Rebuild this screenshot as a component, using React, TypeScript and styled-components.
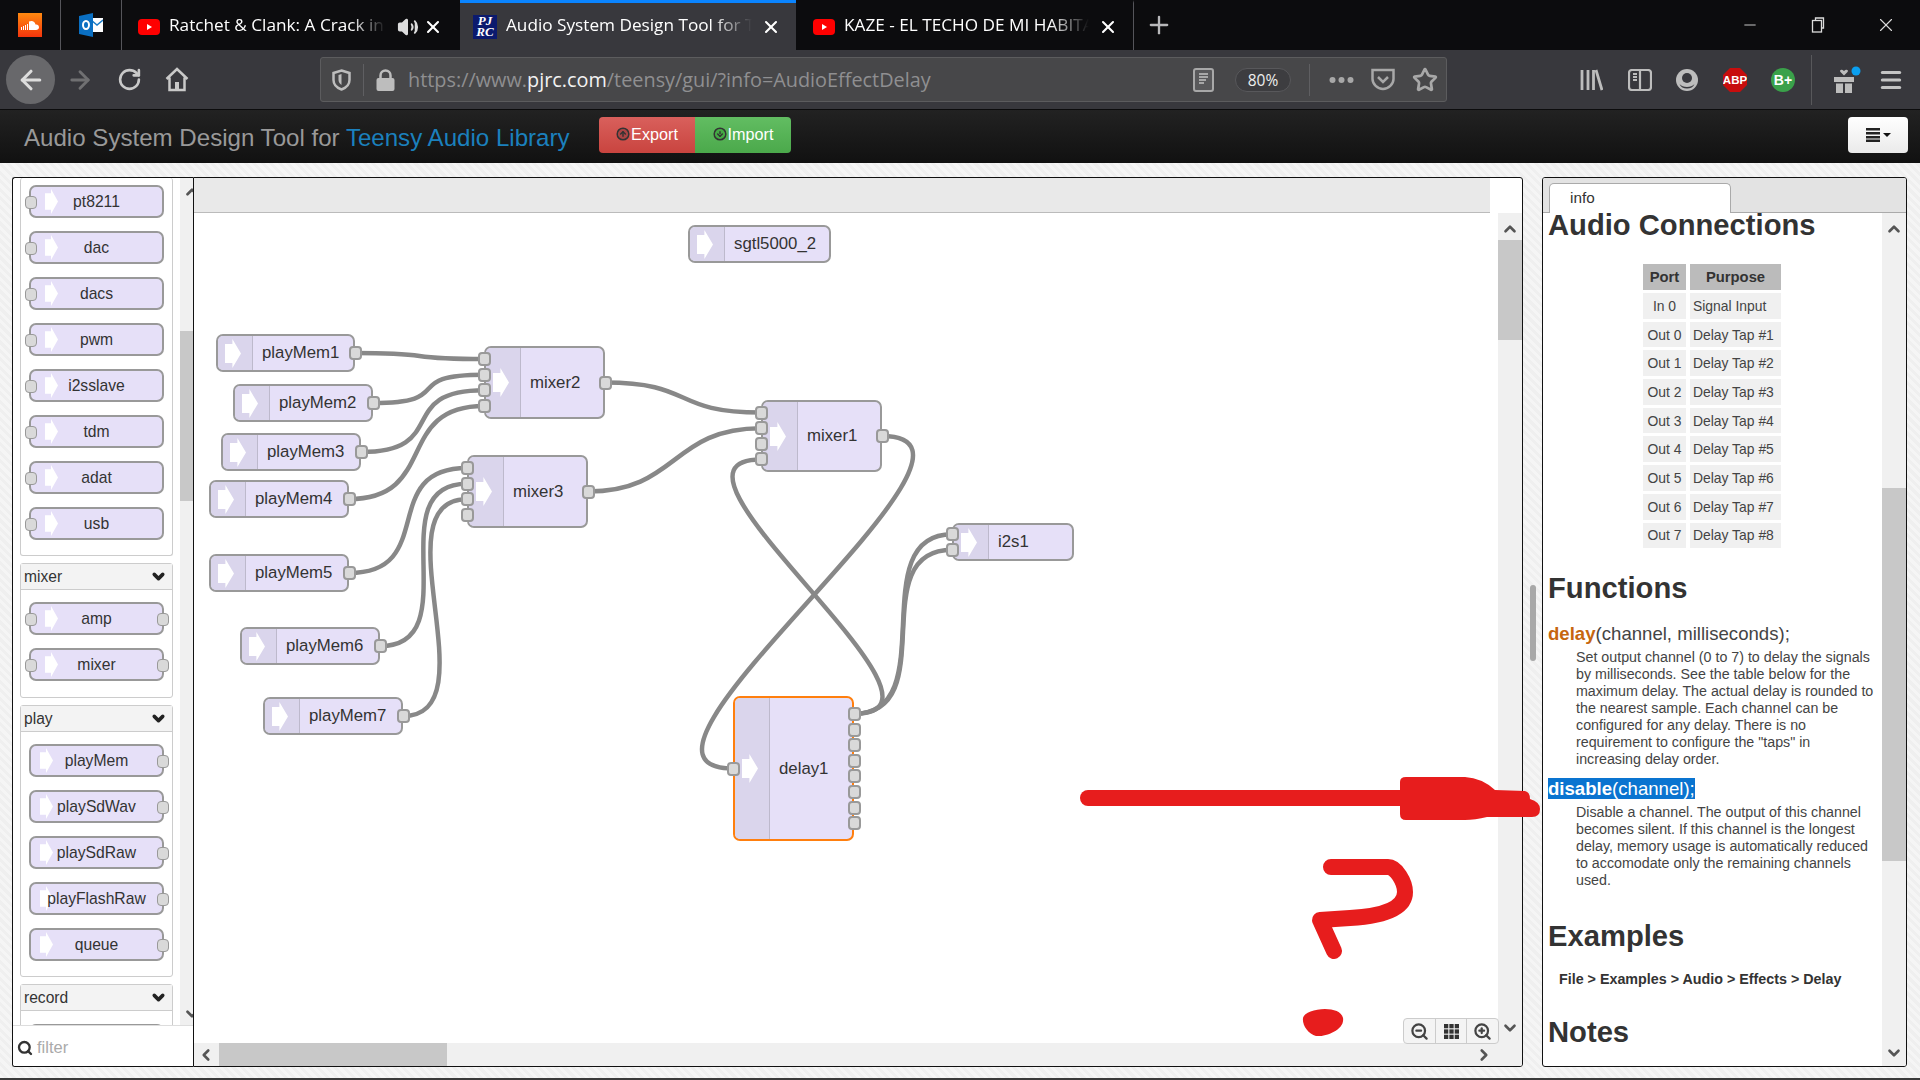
import React from 'react';
import styled, { createGlobalStyle } from 'styled-components';
import {
    ArrowLeft,
    ArrowRight,
    ChevronDown,
    ChevronLeft,
    ChevronRight,
    ChevronUp,
    CircleArrowDown,
    CircleArrowUp,
    Menu,
    Minus,
    Plus,
    RotateCw,
    Search,
    Star,
    Volume2,
    X,
    ZoomIn,
    ZoomOut,
} from 'lucide-react';

const CANVAS_X = 195;
const CANVAS_Y = 213;
const NODE_CURVE = 120;
const PORT_STEP = 15.6;

interface IFlowNode {
    id: string;
    x: number;
    y: number;
    w: number;
    h: number;
    inputs?: number;
    outputs?: number;
    selected?: boolean;
}

const flowNodes: IFlowNode[] = [
    { id: 'sgtl5000_2', x: 689, y: 225, w: 143, h: 38 },
    { id: 'playMem1', x: 217, y: 334, w: 139, h: 38, outputs: 1 },
    { id: 'playMem2', x: 234, y: 384, w: 140, h: 38, outputs: 1 },
    { id: 'playMem3', x: 222, y: 433, w: 140, h: 38, outputs: 1 },
    { id: 'playMem4', x: 210, y: 480, w: 140, h: 38, outputs: 1 },
    { id: 'playMem5', x: 210, y: 554, w: 140, h: 38, outputs: 1 },
    { id: 'playMem6', x: 241, y: 627, w: 140, h: 38, outputs: 1 },
    { id: 'playMem7', x: 264, y: 697, w: 140, h: 38, outputs: 1 },
    { id: 'mixer2', x: 485, y: 346, w: 121, h: 73, inputs: 4, outputs: 1 },
    { id: 'mixer3', x: 468, y: 455, w: 121, h: 73, inputs: 4, outputs: 1 },
    { id: 'mixer1', x: 762, y: 400, w: 121, h: 72, inputs: 4, outputs: 1 },
    { id: 'i2s1', x: 953, y: 523, w: 122, h: 38, inputs: 2 },
    { id: 'delay1', x: 734, y: 696, w: 121, h: 145, inputs: 1, outputs: 8, selected: true },
];

const links: [string, number, string, number][] = [
    ['playMem1', 0, 'mixer2', 0],
    ['playMem2', 0, 'mixer2', 1],
    ['playMem3', 0, 'mixer2', 2],
    ['playMem4', 0, 'mixer2', 3],
    ['playMem5', 0, 'mixer3', 0],
    ['playMem6', 0, 'mixer3', 1],
    ['playMem7', 0, 'mixer3', 2],
    ['mixer2', 0, 'mixer1', 0],
    ['mixer3', 0, 'mixer1', 1],
    ['delay1', 0, 'mixer1', 3],
    ['mixer1', 0, 'delay1', 0],
    ['delay1', 0, 'i2s1', 0],
    ['delay1', 0, 'i2s1', 1],
];

const portY = (node: IFlowNode, index: number, count: number) =>
    node.y + node.h / 2 + (index - (count - 1) / 2) * PORT_STEP;

// same bezier shape the node editor uses for its links
const wirePath = (x1: number, y1: number, x2: number, y2: number) => {
    const dx = x2 - x1;
    const dy = y2 - y1;
    const delta = Math.sqrt(dx * dx + dy * dy);
    let scale = 0.75;
    if (delta < NODE_CURVE) {
        scale = 0.75 - 0.75 * ((NODE_CURVE - delta) / NODE_CURVE);
    }
    if (dx < 0) {
        scale += 2 * (Math.min(5 * NODE_CURVE, Math.abs(dx)) / (5 * NODE_CURVE));
    }
    const off = scale * NODE_CURVE;
    return `M${x1} ${y1} C${x1 + off} ${y1} ${x2 - off} ${y2} ${x2} ${y2}`;
};

const GlobalStyle = createGlobalStyle`
    html, body {
        margin: 0;
        padding: 0;
        background: #38383d;
    }
    * {
        box-sizing: border-box;
    }
`;

const Page = styled.div`
    position: relative;
    width: 1920px;
    height: 1080px;
    display: flex;
    flex-direction: column;
    overflow: hidden;
    font-family: 'Liberation Sans', Arial, sans-serif;
`;

/* browser chrome */
const TabStrip = styled.div`
    height: 50px;
    flex: none;
    display: flex;
    background: #0c0c0e;
    color: #fff;
    font-family: 'Open Sans', sans-serif;
    font-size: 17.2px;
`;

const PinnedTab = styled.div`
    width: 61px;
    display: flex;
    align-items: center;
    justify-content: center;
    border-right: 1px solid #55555a;
`;

const Tab = styled.div<{ $w: number; $active?: boolean; $sep?: boolean; $pad: number; $right: number }>`
    width: ${(p) => p.$w}px;
    display: flex;
    align-items: center;
    gap: 9px;
    padding: 0 ${(p) => p.$right}px 0 ${(p) => p.$pad}px;
    background: ${(p) => (p.$active ? '#38383d' : 'transparent')};
    border-top: 3px solid ${(p) => (p.$active ? '#0a84ff' : 'transparent')};
    border-right: ${(p) => (p.$sep ? '1px solid #55555a' : 'none')};
`;

const TabTitle = styled.span`
    flex: 1;
    min-width: 0;
    padding-bottom: 4px;
    white-space: nowrap;
    overflow: hidden;
    -webkit-mask-image: linear-gradient(to right, #000 84%, transparent 100%);
    mask-image: linear-gradient(to right, #000 84%, transparent 100%);
`;

const SpeakerSlot = styled.span`
    display: flex;
    flex: none;
    margin: 0 -5px 0 2px;
`;

const PjrcIcon = styled.span`
    width: 24px;
    height: 24px;
    flex: none;
    background: #0b1a6e;
    color: #fff;
    font-family: 'Liberation Serif', serif;
    font-style: italic;
    font-weight: bold;
    font-size: 13px;
    line-height: 11.5px;
    text-align: center;
`;

const NewTab = styled.div`
    width: 50px;
    display: flex;
    align-items: center;
    justify-content: center;
    color: #b8b8ba;
`;

const WindowControls = styled.div`
    margin-left: auto;
    display: flex;
    align-items: center;
    color: #dcdcdc;
`;

const WindowButton = styled.div`
    width: 68px;
    display: flex;
    justify-content: center;
`;

const NavBar = styled.div`
    height: 60px;
    flex: none;
    display: flex;
    align-items: center;
    background: #38383d;
    border-bottom: 1px solid #0c0c0d;
`;

const NavGroup = styled.div`
    width: 320px;
    flex: none;
    display: flex;
    align-items: center;
    gap: 23px;
    padding-left: 6px;
`;

const BackButton = styled.div`
    width: 49px;
    height: 49px;
    margin-right: -12px;
    border-radius: 50%;
    background: #68686b;
    color: #ddd;
    display: flex;
    align-items: center;
    justify-content: center;
`;

const UrlBar = styled.div`
    width: 1127px;
    height: 45px;
    flex: none;
    display: flex;
    align-items: center;
    padding: 0 8px 0 11px;
    background: #474749;
    border: 1px solid #5c5c5e;
    border-radius: 3px;
`;

const UrlDivider = styled.div<{ $ml: number; $mr: number; $h: number }>`
    width: 1px;
    height: ${(p) => p.$h}px;
    margin: 0 ${(p) => p.$mr}px 0 ${(p) => p.$ml}px;
    background: #5f5f62;
    flex: none;
`;

const UrlText = styled.div`
    flex: 1;
    margin-left: 13px;
    font-family: 'Open Sans', sans-serif;
    font-size: 19.85px;
    color: #8f8f91;
    white-space: nowrap;
`;

const Host = styled.span`
    color: #f2f2f2;
`;

const ZoomPill = styled.div`
    width: 56px;
    height: 24px;
    margin: 0 18px 0 21px;
    flex: none;
    border: 1px solid #58585b;
    border-radius: 12px;
    background: #3d3d40;
    color: #eee;
    font-family: 'Open Sans', sans-serif;
    font-size: 15.5px;
    line-height: 22px;
    text-align: center;
`;

const UrlSpacer = styled.span`
    width: 17px;
    flex: none;
`;

const ToolGroup = styled.div`
    flex: 1;
    display: flex;
    align-items: center;
    gap: 24.6px;
    padding-left: 133px;
`;

const ToolDivider = styled.div`
    width: 1px;
    height: 50px;
    margin: 0 -4px 0 -9px;
    background: #58585b;
`;

/* page header */
const HeaderBar = styled.div`
    height: 53px;
    flex: none;
    display: flex;
    align-items: flex-start;
    padding: 7px 12px 0 24px;
    background: linear-gradient(#222, #111);
`;

const Brand = styled.div`
    font-size: 24.1px;
    line-height: 40px;
    color: #999;
    margin-top: 1px;
    width: 575px;
    flex: none;
    white-space: nowrap;
`;

const BrandLink = styled.span`
    color: #1b80bd;
`;

const DeployButton = styled.div<{ $bg: string; $left?: boolean }>`
    width: 96px;
    height: 36px;
    display: flex;
    align-items: center;
    justify-content: center;
    gap: 1px;
    padding-bottom: 2px;
    background: ${(p) => p.$bg};
    border-radius: ${(p) => (p.$left ? '4px 0 0 4px' : '0 4px 4px 0')};
    color: #fff;
    font-size: 16.2px;
`;

const MenuButton = styled.div`
    margin-left: auto;
    width: 60px;
    height: 36px;
    display: flex;
    align-items: center;
    justify-content: center;
    gap: 3px;
    border-radius: 4px;
    background: linear-gradient(#fff, #eaeaea);
    color: #222;
`;

const Caret = styled.span`
    border-left: 4px solid transparent;
    border-right: 4px solid transparent;
    border-top: 4px solid #111;
`;

/* main */
const Main = styled.div`
    flex: 1;
    min-height: 0;
    display: flex;
    padding: 14px 13px 11px 12px;
    background: repeating-linear-gradient(45deg, #f5f5f5 0 3px, #efefef 3px 6px);
`;

const Palette = styled.div`
    width: 181px;
    flex: none;
    display: flex;
    flex-direction: column;
    background: #fff;
    border: 1px solid #111;
    border-right: none;
    border-radius: 3px 0 0 3px;
    overflow: hidden;
`;

const PaletteBody = styled.div`
    flex: 1;
    min-height: 0;
    display: flex;
    overflow: hidden;
`;

const PaletteList = styled.div`
    width: 167px;
    flex: none;
    padding: 0 7px;
`;

const PaletteTrack = styled.div`
    flex: 1;
    display: flex;
    flex-direction: column;
    justify-content: space-between;
    position: relative;
    padding-bottom: 4px;
    background: #f0f0f0;
    color: #555;
`;

const TrackThumb = styled.div<{ $top: number; $h: number }>`
    position: absolute;
    left: 0;
    right: 0;
    top: ${(p) => p.$top}px;
    height: ${(p) => p.$h}px;
    background: #c8c8c8;
`;

const ClippedChevron = styled.span<{ $mt: number }>`
    display: block;
    height: 16px;
    margin: ${(p) => p.$mt}px 0 0 3px;
`;

const Group = styled.div<{ $open?: boolean }>`
    border: 1px solid #ccc;
    border-radius: 3px;
    margin-bottom: 7px;
    ${(p) => (p.$open ? 'border-top: none;' : '')}
`;

const GroupHeader = styled.div`
    height: 26px;
    display: flex;
    align-items: center;
    justify-content: space-between;
    padding: 0 5px 0 3px;
    background: #f3f3f3;
    border-bottom: 1px solid #ccc;
    font-size: 15.6px;
    color: #333;
`;

const GroupBody = styled.div<{ $top: number; $bottom: number }>`
    display: flex;
    flex-direction: column;
    gap: 13px;
    padding: ${(p) => p.$top}px 0 ${(p) => p.$bottom}px 8px;
`;

const PaletteNode = styled.div`
    position: relative;
    width: 135px;
    height: 33px;
    background: #e6e0f8;
    border: 2px solid #999;
    border-radius: 7px;
    font-size: 15.7px;
    line-height: 29px;
    text-align: center;
    color: #333;
`;

const PaletteName = styled.span`
    position: relative;
`;

const PaletteArrow = styled.span<{ $left: number }>`
    position: absolute;
    display: flex;
    left: ${(p) => p.$left}px;
    top: 2px;
`;

const PalettePort = styled.span<{ $side: 'left' | 'right' }>`
    position: absolute;
    ${(p) => p.$side}: ${(p) => (p.$side === 'left' ? -6 : -7)}px;
    top: 9px;
    width: 12px;
    height: 13px;
    background: #d9d9d9;
    border: 1.5px solid #999;
    border-radius: 4px;
`;

const FilterBox = styled.div`
    height: 41px;
    flex: none;
    display: flex;
    align-items: center;
    gap: 4px;
    padding: 3px 0 0 4px;
    background: #fff;
    border-top: 1px solid #ddd;
    font-size: 16.5px;
    color: #aaa;
`;

const Workspace = styled.div`
    width: 1330px;
    flex: none;
    display: flex;
    flex-direction: column;
    position: relative;
    background: #fff;
    border: 1px solid #111;
    border-radius: 0 3px 3px 0;
    overflow: hidden;
`;

const WorkspaceTabs = styled.div`
    height: 35px;
    width: 1296px;
    flex: none;
    background: #e9e9e9;
    border-bottom: 1px solid #bbb;
`;

const WorkspaceRow = styled.div`
    flex: 1;
    min-height: 0;
    display: flex;
`;

const CanvasColumn = styled.div`
    width: 1304px;
    flex: none;
    display: flex;
    flex-direction: column;
`;

const Canvas = styled.div`
    flex: 1;
    min-height: 0;
    position: relative;
    overflow: hidden;
    background: #fff;
`;

const WireLayer = styled.svg`
    position: absolute;
    left: 0;
    top: 0;
`;

const FlowNodeBox = styled.div<{ $x: number; $y: number; $w: number; $h: number; $selected?: boolean }>`
    position: absolute;
    left: ${(p) => p.$x}px;
    top: ${(p) => p.$y}px;
    width: ${(p) => p.$w}px;
    height: ${(p) => p.$h}px;
    display: flex;
    align-items: center;
    background: #e6e0f8;
    border: 2px solid ${(p) => (p.$selected ? '#ff7f0e' : '#999')};
    border-radius: 7px;
    font-size: 16.8px;
    color: #333;
`;

const FlowIcon = styled.div`
    width: 35px;
    align-self: stretch;
    flex: none;
    display: flex;
    align-items: center;
    padding-left: 7px;
    background: #dad5ec;
    border-right: 1px solid #bdb9cc;
    border-radius: 5px 0 0 5px;
`;

const FlowLabel = styled.span`
    margin-left: 9px;
`;

const FlowPort = styled.span<{ $side: 'left' | 'right'; $center: number }>`
    position: absolute;
    ${(p) => p.$side}: ${(p) => (p.$side === 'left' ? -8 : -9)}px;
    top: ${(p) => p.$center - 9}px;
    width: 13px;
    height: 14px;
    background: #d9d9d9;
    border: 2px solid #999;
    border-radius: 4px;
`;

const ZoomControls = styled.div`
    position: absolute;
    right: 23px;
    bottom: 22px;
    width: 96px;
    height: 26px;
    display: flex;
    background: #f4f4f4;
    border: 1px solid #ccc;
    border-radius: 4px;
    color: #444;
`;

const ZoomCell = styled.div<{ $sep?: boolean }>`
    flex: 1;
    display: flex;
    align-items: center;
    justify-content: center;
    border-right: ${(p) => (p.$sep ? '1px solid #ccc' : 'none')};
`;

const HScroll = styled.div`
    height: 23px;
    flex: none;
    position: relative;
    display: flex;
    align-items: center;
    justify-content: space-between;
    padding: 0 5px 0 3px;
    background: #f0f0f0;
    color: #555;
`;

const HThumb = styled.div`
    position: absolute;
    left: 25px;
    top: 0;
    bottom: 0;
    width: 228px;
    background: #c8c8c8;
`;

const VScroll = styled.div<{ $bottom: number }>`
    flex: 1;
    position: relative;
    display: flex;
    flex-direction: column;
    align-items: center;
    justify-content: space-between;
    padding: 7px 0 ${(p) => p.$bottom}px;
    background: #f0f0f0;
    color: #555;
`;

const SideGap = styled.div`
    width: 19px;
    flex: none;
    display: flex;
    align-items: center;
    justify-content: center;
`;

const Splitter = styled.div`
    width: 6px;
    height: 76px;
    margin: 2px 0 0 1px;
    border-radius: 3px;
    background: #a8a8a8;
`;

const Sidebar = styled.div`
    flex: 1;
    min-width: 0;
    display: flex;
    flex-direction: column;
    background: #fff;
    border: 1px solid #111;
    border-radius: 3px;
    overflow: hidden;
`;

const SidebarTabs = styled.div`
    height: 35px;
    flex: none;
    display: flex;
    align-items: flex-end;
    padding-left: 6px;
    background: #e3e3e3;
    border-bottom: 1px solid #aaa;
`;

const SidebarTab = styled.div`
    width: 182px;
    height: 30px;
    margin-bottom: -1px;
    padding-left: 20px;
    background: #fff;
    border: 1px solid #aaa;
    border-bottom: none;
    border-radius: 5px 5px 0 0;
    font-size: 15.3px;
    line-height: 27px;
    color: #333;
`;

const SidebarRow = styled.div`
    flex: 1;
    min-height: 0;
    display: flex;
`;

const SidebarContent = styled.div`
    width: 339px;
    flex: none;
    padding-left: 5px;
    overflow: hidden;
    color: #333;
`;

const Heading = styled.h2<{ $mt: number }>`
    margin: ${(p) => p.$mt}px 0 0;
    font-size: 29.2px;
    line-height: 32px;
    font-weight: bold;
    color: #333;
`;

const PortTable = styled.table`
    margin: 20px 0 0 91px;
    border-collapse: separate;
    border-spacing: 4px 3px;
    font-size: 13.9px;
    color: #444;
`;

const HeadCell = styled.th<{ $w: number }>`
    width: ${(p) => p.$w}px;
    height: 26px;
    padding: 0;
    background: #bbb;
    color: #333;
    font-size: 14.8px;
    text-align: center;
`;

const Cell = styled.td<{ $center?: boolean }>`
    height: 25.7px;
    padding: 0 0 0 ${(p) => (p.$center ? 0 : 3)}px;
    background: #f0f0f0;
    text-align: ${(p) => (p.$center ? 'center' : 'left')};
    white-space: nowrap;
`;

const Signature = styled.div<{ $mt: number }>`
    margin-top: ${(p) => p.$mt}px;
    font-size: 18.6px;
    line-height: 22px;
    color: #444;
`;

const FnName = styled.b`
    color: #c6660f;
`;

const Selected = styled.span`
    background: #0a74d0;
    color: #fff;
    & b {
        color: #fff;
    }
`;

const Description = styled.p`
    margin: 3.5px 0 0 28px;
    width: 300px;
    font-size: 14.25px;
    line-height: 17px;
    color: #444;
`;

const ExamplePath = styled.div`
    margin: 19.5px 0 0 11px;
    font-size: 14.3px;
    line-height: 17px;
    font-weight: bold;
    color: #333;
`;

const BottomEdge = styled.div`
    height: 2px;
    flex: none;
    background: #3a3a3a;
`;

const ScribbleLayer = styled.svg`
    position: absolute;
    left: 0;
    top: 0;
    pointer-events: none;
`;

const SoundCloudIcon = () => (
    <svg width="24" height="24" viewBox="0 0 24 24">
        <defs>
            <linearGradient id="sc" x1="0" y1="0" x2="0" y2="1">
                <stop offset="0" stopColor="#ff8a10" />
                <stop offset="1" stopColor="#f5350c" />
            </linearGradient>
        </defs>
        <rect width="24" height="24" fill="url(#sc)" />
        <path
            d="M3 14h1v3H3zM5 13h1v4H5zM7 12h1v5H7zM9 11h1v6H9zM11 8.500c3-1.500 6 0 6.500 3 2-.5 3.500 1 3.500 2.800S19.500 17 18 17h-7z"
            fill="#fff"
        />
    </svg>
);

const OutlookIcon = () => (
    <svg width="24" height="24" viewBox="0 0 24 24">
        <rect x="12" y="5" width="12" height="14" fill="#fff" />
        <path d="M12 7l6 5 6-5" fill="none" stroke="#1a7cc8" strokeWidth="1.500" />
        <path d="M0 3l14-3v24L0 21z" fill="#0a6fc2" />
        <ellipse cx="7" cy="12" rx="3" ry="4" fill="none" stroke="#fff" strokeWidth="2" />
    </svg>
);

const YoutubeIcon = () => (
    <svg width="22" height="16" viewBox="0 0 22 16" style={{ flex: 'none' }}>
        <rect width="22" height="16" rx="4" fill="#f00" />
        <path d="M9 5l5 3-5 3z" fill="#fff" />
    </svg>
);

const NodeArrow = ({ w, h }: { w: number; h: number }) => (
    <svg width={w} height={h} viewBox="0 0 13 23" preserveAspectRatio="none">
        <path d="M0 4 L6 4 L6 0 L13 11.500 L6 23 L6 19 L0 19 Z" fill="#fff" />
    </svg>
);

const HomeIcon = () => (
    <svg width="24" height="25" viewBox="0 0 24 25" fill="none" stroke="#c9c9c9" strokeWidth="2.500">
        <path d="M1.500 12 12 2l10.500 10M4.500 10.500V23h15V10.500" />
        <rect x="10" y="15" width="4" height="8" fill="#c9c9c9" stroke="none" />
    </svg>
);

const ShieldIcon = () => (
    <svg width="19" height="22" viewBox="0 0 19 22">
        <path d="M9.500 1.500 17.500 4v7c0 5-4 8-8 9.500-4-1.500-8-4.500-8-9.500V4z" fill="none" stroke="#bdbdbd" strokeWidth="2.500" />
        <path d="M9.500 5 6.500 6v5c0 2 1.500 4 3 5z" fill="#bdbdbd" />
    </svg>
);

const LockIcon = () => (
    <svg width="19" height="22" viewBox="0 0 19 22">
        <path d="M4.500 10V6.500a5 5 0 0 1 10 0V10" fill="none" stroke="#bdbdbd" strokeWidth="2.500" />
        <rect x="0.500" y="9" width="18" height="13" rx="2" fill="#bdbdbd" />
    </svg>
);

const ReaderIcon = () => (
    <svg width="21" height="24" viewBox="0 0 21 24" fill="none" stroke="#a8a8a8">
        <rect x="1" y="1" width="19" height="22" rx="2" strokeWidth="2" fill="#59595b" />
        <path d="M6 6h9M6 9h9M6 12h7M6 15h5" strokeWidth="1.300" stroke="#c2c2c2" />
    </svg>
);

const DotsIcon = () => (
    <svg width="25" height="8" viewBox="0 0 25 8" fill="#a8a8a8">
        <circle cx="3.500" cy="4" r="3" />
        <circle cx="12.500" cy="4" r="3" />
        <circle cx="21.500" cy="4" r="3" />
    </svg>
);

const PocketIcon = () => (
    <svg width="24" height="23" viewBox="0 0 24 23" fill="none" stroke="#a8a8a8" strokeWidth="2.500">
        <path d="M1.500 2h21v9c0 5-5 10-10.500 10S1.500 16 1.500 11z" />
        <path d="M7 9l5 5 5-5" />
    </svg>
);

const LibraryIcon = () => (
    <svg width="23" height="22" viewBox="0 0 23 22" stroke="#bdbdbd" strokeWidth="2.800">
        <path d="M2 1v20M8 1v20M13.500 1v20M16 1l6 20" />
    </svg>
);

const SidebarIcon = () => (
    <svg width="24" height="22" viewBox="0 0 24 22" fill="none" stroke="#bdbdbd" strokeWidth="2.200">
        <rect x="1" y="1" width="22" height="20" rx="3" />
        <path d="M12 1v20M5 5h4M5 8h4M5 11h4" />
    </svg>
);

const AccountIcon = () => (
    <svg width="22" height="22" viewBox="0 0 22 22">
        <circle cx="11" cy="11" r="11" fill="#bdbdbd" />
        <circle cx="11" cy="9" r="5" fill="#38383d" />
        <path d="M3.500 15c3 4 12 4 15 0-2 6-13 6-15 0z" fill="#38383d" />
    </svg>
);

const AbpIcon = () => (
    <svg width="24" height="24" viewBox="0 0 24 24">
        <path d="M7 0h10l7 7v10l-7 7H7l-7-7V7z" fill="#c70d0d" />
        <text x="12" y="16" fontSize="11.500" fontWeight="bold" fontFamily="'Liberation Sans'" textAnchor="middle" fill="#fff">
            ABP
        </text>
    </svg>
);

const BPlusIcon = () => (
    <svg width="24" height="24" viewBox="0 0 24 24">
        <circle cx="12" cy="12" r="12" fill="#3aa14a" />
        <text x="12" y="17" fontSize="14" fontWeight="bold" fontFamily="'Liberation Sans'" textAnchor="middle" fill="#fff">
            B+
        </text>
    </svg>
);

const GiftIcon = () => (
    <svg width="28" height="28" viewBox="0 0 28 28" style={{ marginRight: -7 }}>
        <path d="M1 11h20v5H1zM3 17.500h7V27H3zM12 17.500h7V27h-7z" fill="#bdbdbd" />
        <path d="M11 9.500 7.500 6c-1.500-2 1-3.500 3.500-1 2.500-2.500 5-1 3.500 1z" fill="#bdbdbd" />
        <circle cx="23" cy="5" r="4.500" fill="#0a9ff0" />
    </svg>
);

const GridIcon = () => (
    <svg width="15" height="15" viewBox="0 0 14 14" fill="#333">
        {[0, 5, 10].flatMap((y) => [0, 5, 10].map((x) => <rect key={`${x}-${y}`} x={x} y={y} width="4" height="4" />))}
    </svg>
);

const BarsIcon = () => (
    <svg width="14" height="14" viewBox="0 0 14 14" fill="#222">
        <path d="M0 0h14v2.500H0zM0 4h14v2.500H0zM0 8h14v2.500H0zM0 11.500h14V14H0z" />
    </svg>
);

const RestoreIcon = () => (
    <svg width="15" height="16" viewBox="0 0 15 16" fill="none" stroke="#dcdcdc" strokeWidth="1.300">
        <path d="M4.500 3V1h8v10h-2" />
        <rect x="1.500" y="3.500" width="9" height="11.500" />
    </svg>
);

const Chevrons = {
    up: <ChevronUp size={18} strokeWidth={3.5} />,
    down: <ChevronDown size={18} strokeWidth={3.5} />,
};

const GroupChevron = () => <ChevronDown size={17} strokeWidth={5} color="#222" />;

const PaletteItem = ({ name, input, output }: { name: string; input?: boolean; output?: boolean }) => (
    <PaletteNode>
        <PaletteArrow $left={input ? 14 : 9}>
            <NodeArrow w={13} h={25} />
        </PaletteArrow>
        {input && <PalettePort $side="left" />}
        <PaletteName>{name}</PaletteName>
        {output && <PalettePort $side="right" />}
    </PaletteNode>
);

const FlowItem = ({ node }: { node: IFlowNode }) => {
    const inputs = node.inputs || 0;
    const outputs = node.outputs || 0;
    return (
        <FlowNodeBox
            $x={node.x - CANVAS_X}
            $y={node.y - CANVAS_Y}
            $w={node.w}
            $h={node.h}
            $selected={node.selected}
        >
            <FlowIcon>
                <NodeArrow w={16} h={29} />
            </FlowIcon>
            <FlowLabel>{node.id}</FlowLabel>
            {Array.from({ length: inputs }, (_, i) => (
                <FlowPort key={`i${i}`} $side="left" $center={portY(node, i, inputs) - node.y} />
            ))}
            {Array.from({ length: outputs }, (_, i) => (
                <FlowPort key={`o${i}`} $side="right" $center={portY(node, i, outputs) - node.y} />
            ))}
        </FlowNodeBox>
    );
};

const Wires = () => {
    const byId = (id: string) => flowNodes.find((n) => n.id === id) as IFlowNode;
    return (
        <WireLayer width="1304" height="830" fill="none" stroke="#888" strokeWidth="4.5">
            {links.map(([from, o, to, i]) => {
                const a = byId(from);
                const b = byId(to);
                return (
                    <path
                        key={`${from}${o}${to}${i}`}
                        d={wirePath(
                            a.x + a.w - CANVAS_X,
                            portY(a, o, a.outputs || 1) - CANVAS_Y,
                            b.x - CANVAS_X,
                            portY(b, i, b.inputs || 1) - CANVAS_Y
                        )}
                    />
                );
            })}
        </WireLayer>
    );
};

const audioRows = ['In 0', 'Out 0', 'Out 1', 'Out 2', 'Out 3', 'Out 4', 'Out 5', 'Out 6', 'Out 7'];

export default function App() {
    return (
        <Page>
            <GlobalStyle />
            <TabStrip>
                <PinnedTab>
                    <SoundCloudIcon />
                </PinnedTab>
                <PinnedTab>
                    <OutlookIcon />
                </PinnedTab>
                <Tab $w={338} $pad={16} $right={17}>
                    <YoutubeIcon />
                    <TabTitle>Ratchet &amp; Clank: A Crack in Time</TabTitle>
                    <SpeakerSlot>
                        <Volume2 size={22} fill="#ddd" color="#ddd" />
                    </SpeakerSlot>
                    <X size={20} strokeWidth={2.5} style={{ flex: 'none' }} />
                </Tab>
                <Tab $w={336} $pad={13} $right={15} $active>
                    <PjrcIcon>
                        PJ
                        <br />
                        RC
                    </PjrcIcon>
                    <TabTitle>Audio System Design Tool for Teensy Audio Library</TabTitle>
                    <X size={20} strokeWidth={2.5} style={{ flex: 'none' }} />
                </Tab>
                <Tab $w={338} $pad={17} $right={15} $sep>
                    <YoutubeIcon />
                    <TabTitle>KAZE - EL TECHO DE MI HABITACIÓN</TabTitle>
                    <X size={20} strokeWidth={2.5} style={{ flex: 'none' }} />
                </Tab>
                <NewTab>
                    <Plus size={28} strokeWidth={2} />
                </NewTab>
                <WindowControls>
                    <WindowButton>
                        <Minus size={18} strokeWidth={1.2} />
                    </WindowButton>
                    <WindowButton>
                        <RestoreIcon />
                    </WindowButton>
                    <WindowButton>
                        <X size={22} strokeWidth={1.2} />
                    </WindowButton>
                </WindowControls>
            </TabStrip>

            <NavBar>
                <NavGroup>
                    <BackButton>
                        <ArrowLeft size={30} strokeWidth={2.5} />
                    </BackButton>
                    <ArrowRight size={28} strokeWidth={2.5} color="#707072" />
                    <RotateCw size={25} strokeWidth={2.5} color="#c9c9c9" />
                    <HomeIcon />
                </NavGroup>
                <UrlBar>
                    <ShieldIcon />
                    <UrlDivider $ml={12} $mr={12} $h={32} />
                    <LockIcon />
                    <UrlText>
                        https://www.<Host>pjrc.com</Host>/teensy/gui/?info=AudioEffectDelay
                    </UrlText>
                    <ReaderIcon />
                    <ZoomPill>80%</ZoomPill>
                    <UrlDivider $ml={0} $mr={19} $h={32} />
                    <DotsIcon />
                    <UrlSpacer />
                    <PocketIcon />
                    <UrlSpacer />
                    <Star size={26} strokeWidth={2.5} color="#a8a8a8" />
                </UrlBar>
                <ToolGroup>
                    <LibraryIcon />
                    <SidebarIcon />
                    <AccountIcon />
                    <AbpIcon />
                    <BPlusIcon />
                    <ToolDivider />
                    <GiftIcon />
                    <Menu size={26} strokeWidth={2.8} color="#c4c4c4" />
                </ToolGroup>
            </NavBar>

            <HeaderBar>
                <Brand>
                    Audio System Design Tool for <BrandLink>Teensy Audio Library</BrandLink>
                </Brand>
                <DeployButton $bg="linear-gradient(#d9605c, #c9443f)" $left>
                    <CircleArrowUp size={14} strokeWidth={2.5} color="#333" fill="#a44" />
                    Export
                </DeployButton>
                <DeployButton $bg="linear-gradient(#62bd62, #4ba94b)">
                    <CircleArrowDown size={14} strokeWidth={2.5} color="#333" fill="#4a4" />
                    Import
                </DeployButton>
                <MenuButton>
                    <BarsIcon />
                    <Caret />
                </MenuButton>
            </HeaderBar>

            <Main>
                <Palette>
                    <PaletteBody>
                        <PaletteList>
                            <Group $open>
                                <GroupBody $top={7} $bottom={15}>
                                    {['pt8211', 'dac', 'dacs', 'pwm', 'i2sslave', 'tdm', 'adat', 'usb'].map((n) => (
                                        <PaletteItem key={n} name={n} input />
                                    ))}
                                </GroupBody>
                            </Group>
                            <Group>
                                <GroupHeader>
                                    mixer
                                    <GroupChevron />
                                </GroupHeader>
                                <GroupBody $top={12} $bottom={16}>
                                    <PaletteItem name="amp" input output />
                                    <PaletteItem name="mixer" input output />
                                </GroupBody>
                            </Group>
                            <Group>
                                <GroupHeader>
                                    play
                                    <GroupChevron />
                                </GroupHeader>
                                <GroupBody $top={12} $bottom={15}>
                                    {['playMem', 'playSdWav', 'playSdRaw', 'playFlashRaw', 'queue'].map((n) => (
                                        <PaletteItem key={n} name={n} output />
                                    ))}
                                </GroupBody>
                            </Group>
                            <Group>
                                <GroupHeader>
                                    record
                                    <GroupChevron />
                                </GroupHeader>
                                <GroupBody $top={13} $bottom={14}>
                                    <PaletteItem name="queue" input />
                                </GroupBody>
                            </Group>
                        </PaletteList>
                        <PaletteTrack>
                            <TrackThumb $top={153} $h={170} />
                            <ClippedChevron $mt={5}>{Chevrons.up}</ClippedChevron>
                            <ClippedChevron $mt={0}>{Chevrons.down}</ClippedChevron>
                        </PaletteTrack>
                    </PaletteBody>
                    <FilterBox>
                        <Search size={16} strokeWidth={3.5} color="#333" />
                        filter
                    </FilterBox>
                </Palette>

                <Workspace>
                    <WorkspaceTabs />
                    <WorkspaceRow>
                        <CanvasColumn>
                            <Canvas>
                                <Wires />
                                {flowNodes.map((n) => (
                                    <FlowItem key={n.id} node={n} />
                                ))}
                            </Canvas>
                            <HScroll>
                                <HThumb />
                                <ChevronLeft size={18} strokeWidth={3.5} />
                                <ChevronRight size={18} strokeWidth={3.5} />
                            </HScroll>
                        </CanvasColumn>
                        <VScroll $bottom={29}>
                            <TrackThumb $top={27} $h={100} />
                            {Chevrons.up}
                            {Chevrons.down}
                        </VScroll>
                    </WorkspaceRow>
                    <ZoomControls>
                        <ZoomCell $sep>
                            <ZoomOut size={19} strokeWidth={2.8} />
                        </ZoomCell>
                        <ZoomCell $sep>
                            <GridIcon />
                        </ZoomCell>
                        <ZoomCell>
                            <ZoomIn size={19} strokeWidth={2.8} />
                        </ZoomCell>
                    </ZoomControls>
                </Workspace>

                <SideGap>
                    <Splitter />
                </SideGap>

                <Sidebar>
                    <SidebarTabs>
                        <SidebarTab>info</SidebarTab>
                    </SidebarTabs>
                    <SidebarRow>
                        <SidebarContent>
                            <Heading $mt={-4}>Audio Connections</Heading>
                            <PortTable>
                                <thead>
                                    <tr>
                                        <HeadCell $w={43}>Port</HeadCell>
                                        <HeadCell $w={91}>Purpose</HeadCell>
                                    </tr>
                                </thead>
                                <tbody>
                                    {audioRows.map((port, i) => (
                                        <tr key={port}>
                                            <Cell $center>{port}</Cell>
                                            <Cell>{i === 0 ? 'Signal Input' : `Delay Tap #${i}`}</Cell>
                                        </tr>
                                    ))}
                                </tbody>
                            </PortTable>
                            <Heading $mt={20.4}>Functions</Heading>
                            <Signature $mt={19.5}>
                                <FnName>delay</FnName>(channel, milliseconds);
                            </Signature>
                            <Description>
                                Set output channel (0 to 7) to delay the signals by milliseconds. See the table below
                                for the maximum delay. The actual delay is rounded to the nearest sample. Each channel
                                can be configured for any delay. There is no requirement to configure the "taps" in
                                increasing delay order.
                            </Description>
                            <Signature $mt={10.5}>
                                <Selected>
                                    <b>disable</b>(channel);
                                </Selected>
                            </Signature>
                            <Description>
                                Disable a channel. The output of this channel becomes silent. If this channel is the
                                longest delay, memory usage is automatically reduced to accomodate only the remaining
                                channels used.
                            </Description>
                            <Heading $mt={31}>Examples</Heading>
                            <ExamplePath>File &gt; Examples &gt; Audio &gt; Effects &gt; Delay</ExamplePath>
                            <Heading $mt={27.5}>Notes</Heading>
                        </SidebarContent>
                        <VScroll $bottom={4}>
                            <TrackThumb $top={275} $h={373} />
                            {Chevrons.up}
                            {Chevrons.down}
                        </VScroll>
                    </SidebarRow>
                </Sidebar>
            </Main>
            <BottomEdge />

            <ScribbleLayer width="1920" height="1080" fill="#e71d1d" stroke="none">
                <path d="M1088 798H1410" stroke="#e71d1d" strokeWidth="16" strokeLinecap="round" fill="none" />
                <path d="M1400 782 Q1400 777 1406 777 L1465 777 Q1482 778 1495 790 L1525 791 Q1530 792 1530 799 Q1540 802 1540 809 Q1540 817 1532 817 L1487 817 Q1475 820 1465 820 L1406 820 Q1400 820 1400 814 Z" />
                <path
                    d="M1331 867 L1388 867 C1396 867 1405 882 1405 892 C1405 908 1385 916 1350 918 L1320 920 L1334 951"
                    stroke="#e71d1d"
                    strokeWidth="16"
                    strokeLinecap="round"
                    strokeLinejoin="round"
                    fill="none"
                />
                <path d="M1303 1018 C1305 1008 1340 1004 1343 1018 C1345 1030 1325 1037 1316 1036 C1308 1034 1302 1025 1303 1018 Z" />
            </ScribbleLayer>
        </Page>
    );
}
